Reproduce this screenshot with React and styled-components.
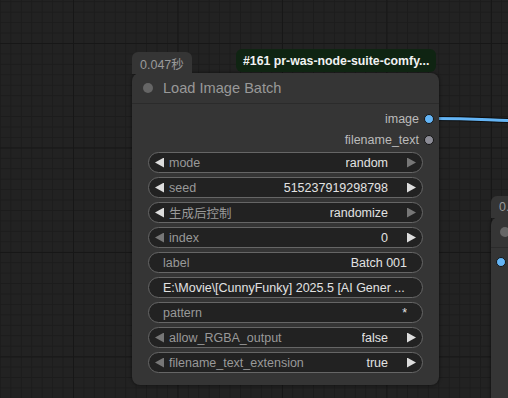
import React from 'react'
import styled, { createGlobalStyle } from 'styled-components'

const GlobalStyle = createGlobalStyle`
    html, body {
        margin:0;
        padding:0;
    }
    body {
        width:508px;
        height:398px;
        overflow:hidden;
        font-family:"Liberation Sans", Arial, "Noto Sans CJK SC", sans-serif;
        background-color:#222;
        background-image:
            linear-gradient(#171717 1px, transparent 1px),
            linear-gradient(90deg, #171717 1px, transparent 1px),
            linear-gradient(#1c1c1c 1px, transparent 1px),
            linear-gradient(90deg, #1c1c1c 1px, transparent 1px);
        background-size:104.5px 104.5px, 104.5px 104.5px, 10.45px 10.45px, 10.45px 10.45px;
        background-position:73px 43px, 73px 43px, 73px 43px, 73px 43px;
    }
`

const Canvas = styled.div`
    position:relative;
    width:508px;
    height:398px;
    overflow:hidden;
`

const Links = styled.svg`
    position:absolute;
    left:0;
    top:0;
`

const Node = styled.div`
    position:absolute;
    left:${p => p.$x}px;
    top:${p => p.$y}px;
    width:${p => p.$w}px;
    background-color:#353535;
    border-radius:8px;
    box-shadow:0 0 3px 1px rgba(0,0,0,0.35);
    display:flex;
    flex-direction:column;
`

const TimeBadge = styled.div`
    position:absolute;
    left:0;
    top:-21px;
    height:22px;
    padding:0 8px;
    background-color:#353535;
    border-radius:6px 6px 0 0;
    color:#9a9a9a;
    font-size:12.5px;
    display:flex;
    align-items:center;
`

const TitleBadge = styled.div`
    position:absolute;
    left:104px;
    top:-24px;
    width:200px;
    height:23px;
    box-sizing:border-box;
    padding:0 7px;
    background-color:#0f2412;
    border-radius:6px;
    color:#f2f2f2;
    font-size:12.3px;
    font-weight:bold;
    display:flex;
    align-items:center;
    white-space:nowrap;
`

const Title = styled.div`
    height:30px;
    display:flex;
    align-items:center;
    padding-left:11px;
    border-bottom:1px solid #2b2b2b;
    color:#999;
    font-size:14.6px;
    white-space:nowrap;
`

const TitleDot = styled.span`
    width:10px;
    height:10px;
    border-radius:50%;
    background-color:#666;
    margin-right:10px;
    flex-shrink:0;
`

const Body = styled.div`
    padding:4px 0 12px;
    display:flex;
    flex-direction:column;
`

const Output = styled.div`
    height:21px;
    display:flex;
    align-items:center;
    justify-content:flex-end;
    padding-right:5px;
    color:#bbb;
    font-size:12.5px;
`

const Slot = styled.span`
    width:10px;
    height:10px;
    flex-shrink:0;
    box-sizing:border-box;
    border-radius:50%;
    border:1px solid #151515;
    background-color:${p => p.$color};
    margin-left:5px;
`

const Widgets = styled.div`
    margin-top:2px;
    padding:0 16px;
    display:flex;
    flex-direction:column;
    gap:4px;
`

const Widget = styled.div`
    height:21px;
    box-sizing:border-box;
    border:1px solid #666;
    border-radius:11px;
    background-color:#222;
    display:flex;
    align-items:center;
    padding:${p => p.$text ? '0 15px 0 14px' : '0 6px'};
    font-size:12.5px;
    white-space:nowrap;
`

const Arrow = styled.span`
    width:9px;
    height:10px;
    flex-shrink:0;
    background-color:${p => p.$dim ? '#777' : '#ddd'};
    clip-path:${p => p.$right ? 'polygon(0 0, 100% 50%, 0 100%)' : 'polygon(100% 0, 0 50%, 100% 100%)'};
    margin-left:${p => p.$right ? '19px' : '0'};
`

const Label = styled.span`
    color:#999;
    margin-left:${p => p.$text ? '0' : '5px'};
    flex:1;
`

const Value = styled.span`
    color:#e2e2e2;
    overflow:hidden;
`

const SideNode = styled(Node)`
    height:200px;
    border-radius:8px 0 0 8px;
`

const SideTitle = styled.div`
    height:30px;
    display:flex;
    align-items:center;
    padding-left:9px;
    border-bottom:1px solid #2b2b2b;
`

const SideInput = styled.div`
    height:27px;
    display:flex;
    align-items:center;
    padding-left:0;
`

const combos = [
    { label: 'mode', value: 'random', l: false, r: true },
    { label: 'seed', value: '515237919298798', l: false, r: false },
    { label: '生成后控制', value: 'randomize', l: false, r: true },
    { label: 'index', value: '0', l: true, r: false },
]

const combos2 = [
    { label: 'allow_RGBA_output', value: 'false', l: true, r: false },
    { label: 'filename_text_extension', value: 'true', l: true, r: false },
]

function Combo({ w }) {
    return (
        <Widget>
            <Arrow $dim={w.l} />
            <Label>{w.label}</Label>
            <Value>{w.value}</Value>
            <Arrow $right $dim={w.r} />
        </Widget>
    )
}

export default function App() {
    return (
        <>
            <GlobalStyle />
            <Canvas>
                <Links width="508" height="398">
                    <path d="M432 118.5 C470 118.5, 480 119.5, 510 120.5" stroke="rgba(0,0,0,0.6)" strokeWidth="5" fill="none" />
                    <path d="M432 118.5 C470 118.5, 480 119.5, 510 120.5" stroke="#64b5f6" strokeWidth="3" fill="none" />
                </Links>

                <Node $x={132} $y={73} $w={307}>
                    <TimeBadge>0.047秒</TimeBadge>
                    <TitleBadge>#161 pr-was-node-suite-comfy...</TitleBadge>
                    <Title>
                        <TitleDot />
                        Load Image Batch
                    </Title>
                    <Body>
                        <Output>image<Slot $color="#64b5f6" /></Output>
                        <Output>filename_text<Slot $color="#8c8c96" /></Output>
                        <Widgets>
                            {combos.map(w => <Combo key={w.label} w={w} />)}
                            <Widget $text>
                                <Label $text>label</Label>
                                <Value>Batch 001</Value>
                            </Widget>
                            <Widget $text>
                                <Value>E:\Movie\[CunnyFunky] 2025.5 [AI Gener ...</Value>
                            </Widget>
                            <Widget $text>
                                <Label $text>pattern</Label>
                                <Value>*</Value>
                            </Widget>
                            {combos2.map(w => <Combo key={w.label} w={w} />)}
                        </Widgets>
                    </Body>
                </Node>

                <SideNode $x={491} $y={217} $w={40}>
                    <TimeBadge>0.</TimeBadge>
                    <SideTitle>
                        <TitleDot />
                    </SideTitle>
                    <SideInput>
                        <Slot $color="#64b5f6" />
                    </SideInput>
                </SideNode>
            </Canvas>
        </>
    )
}
